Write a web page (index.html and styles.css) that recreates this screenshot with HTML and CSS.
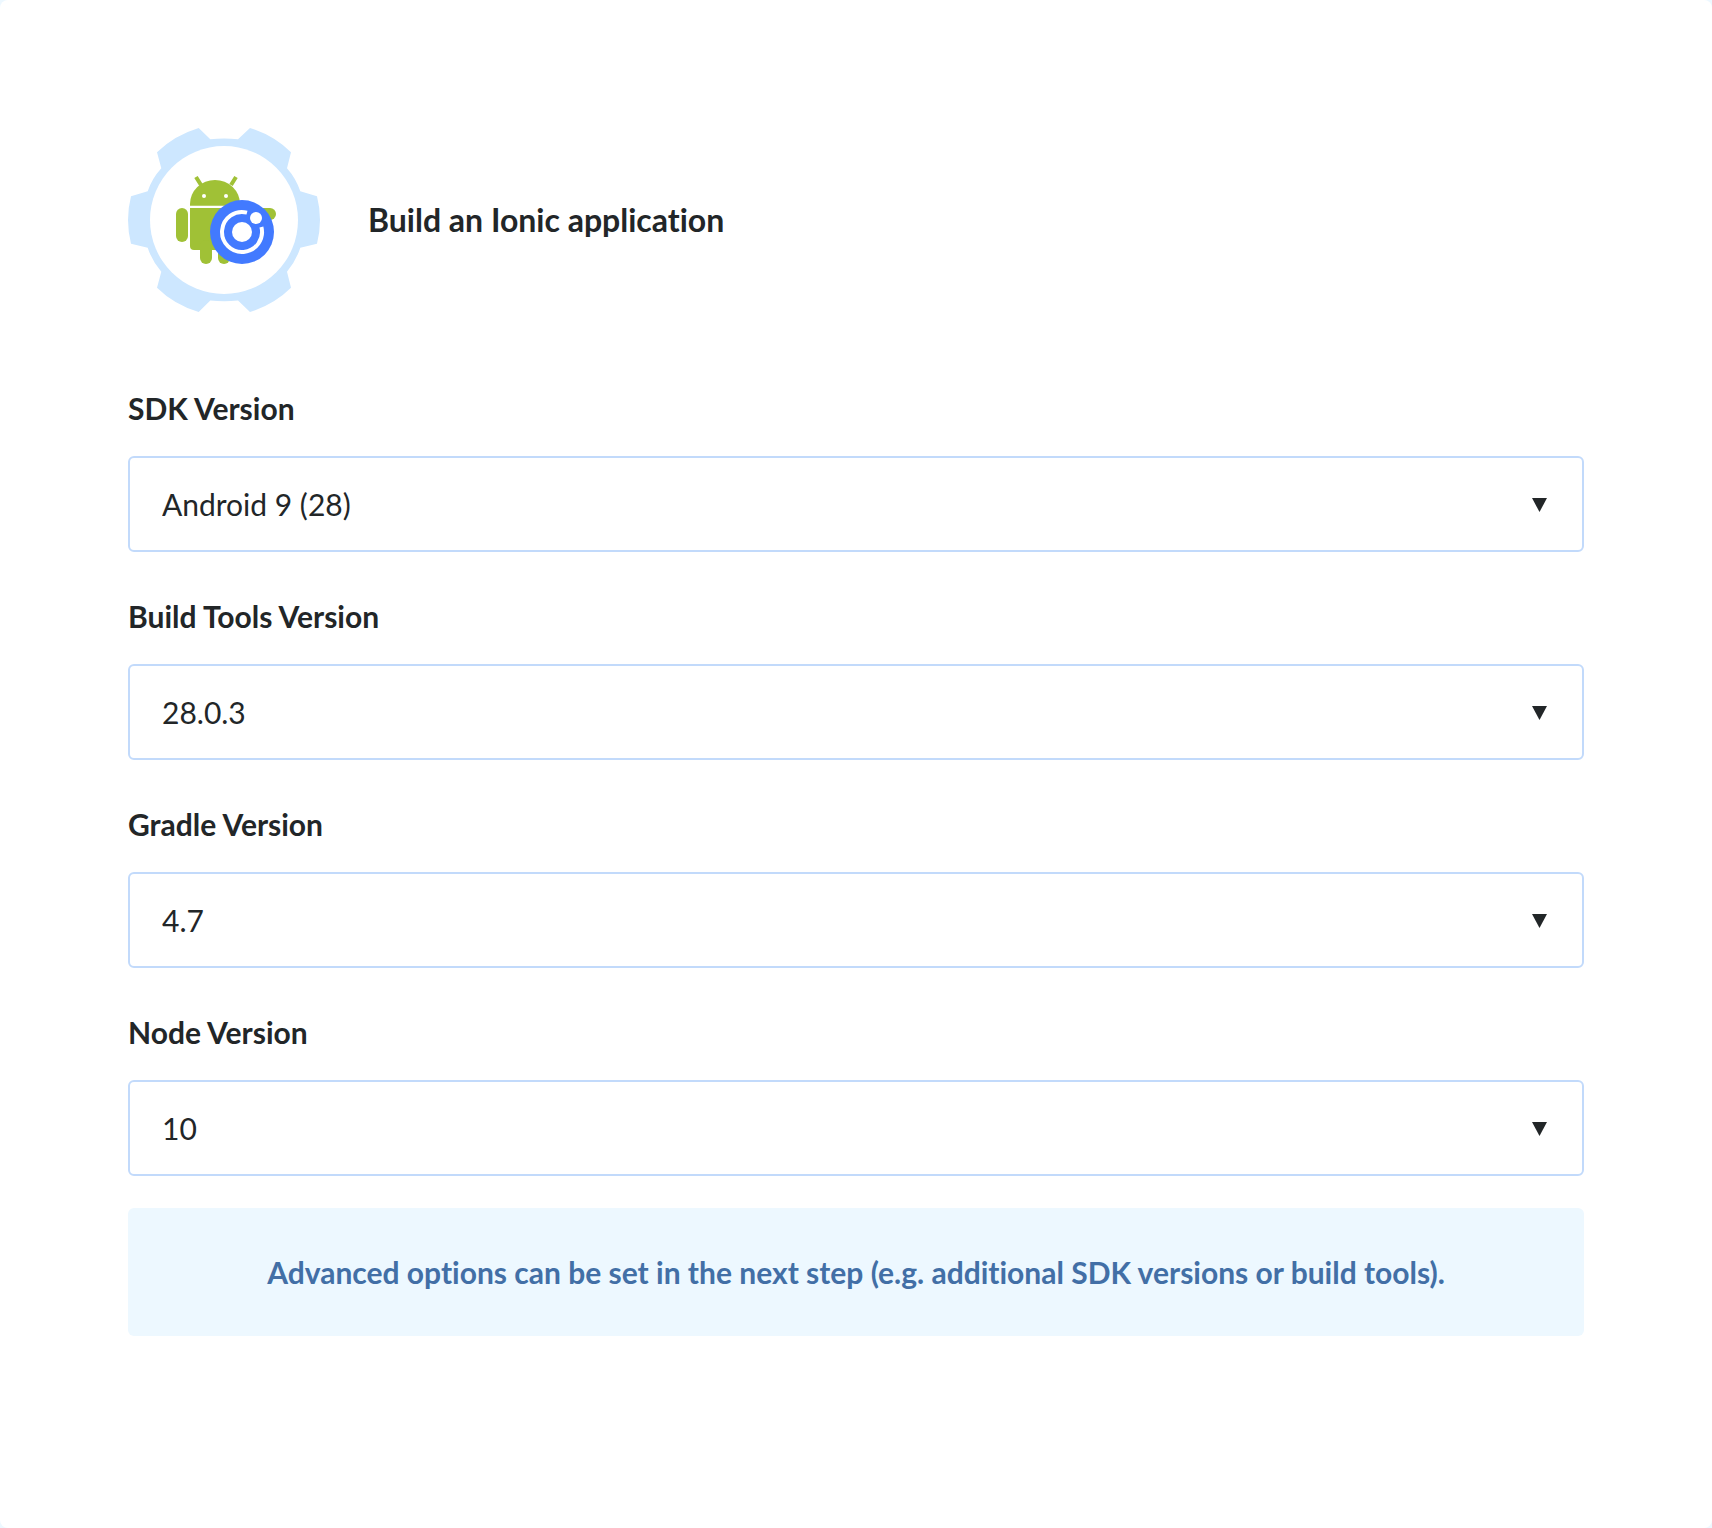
FILE: index.html
```html
<!DOCTYPE html>
<html lang="en">
<head>
<meta charset="utf-8">
<meta name="viewport" content="width=device-width, initial-scale=1">
<title>Build an Ionic application</title>
<link rel="stylesheet" href="styles.css">
</head>
<body>
<main class="card">
  <header class="card-header">
    <svg class="stack-icon" viewBox="0 0 192 192" aria-hidden="true">
      <path fill="#cde7ff" d="M70.7 4 82.3 15.2Q96 13.800 110 15.200L122 4Q146 11.500 163 28.300L159 44.300Q168 54.500 172.300 67.300L189 72.300Q195 96 189 119.700L172.300 123.700Q168 137 159 147.700L163 163.700Q146 180.500 122 188L110 176.500Q96 178 82.300 176.500L70.700 188Q46 180.500 29 163.700L33.300 147.700Q24 137 19.700 123.700L3 119.700Q-3 96 3 72.300L19.700 67.300Q24 54.500 33.300 44.300L29 28.300Q46 11.500 70.700 4Z"/>
      <circle cx="96" cy="96" r="74" fill="#fff"/>
      <g fill="#a0c136">
        <path d="M62 81.700V80a25 24 0 0 1 50 0v1.700Z"/>
        <path d="m68 53 5 8M108 53l-5 8" stroke="#a0c136" stroke-width="4"/>
        <rect x="48" y="84" width="12" height="34" rx="6"/>
        <path d="M62 84h50v42H66q-4 0-4-4Z"/>
        <rect x="72" y="116" width="12" height="24" rx="6"/>
        <rect x="90" y="116" width="12" height="24" rx="6"/>
        <rect x="114" y="84" width="34" height="12" rx="6"/>
      </g>
      <circle cx="76" cy="72" r="2" fill="#fff"/>
      <circle cx="98" cy="72" r="2" fill="#fff"/>
      <circle cx="114" cy="108" r="32" fill="#427aff"/>
      <circle cx="114" cy="108" r="10" fill="#fff"/>
      <path d="M119 88.600A20 20 0 1 0 133.400 103" fill="none" stroke="#fff" stroke-width="4"/>
      <circle cx="128" cy="94" r="6" fill="#fff"/>
    </svg>
    <h1 class="card-title">Build an Ionic application</h1>
  </header>
  <form class="options">
    <div class="field">
      <label class="field-label" for="sdk">SDK Version</label>
      <div class="select-box"><select class="select" id="sdk"><option>Android 9 (28)</option></select></div>
    </div>
    <div class="field">
      <label class="field-label" for="tools">Build Tools Version</label>
      <div class="select-box"><select class="select" id="tools"><option>28.0.3</option></select></div>
    </div>
    <div class="field">
      <label class="field-label" for="gradle">Gradle Version</label>
      <div class="select-box"><select class="select" id="gradle"><option>4.7</option></select></div>
    </div>
    <div class="field">
      <label class="field-label" for="node">Node Version</label>
      <div class="select-box"><select class="select" id="node"><option>10</option></select></div>
    </div>
  </form>
  <p class="note">Advanced options can be set in the next step (e.g. additional SDK versions or build tools).</p>
</main>
</body>
</html>
```
FILE: styles.css
```css
* {
  box-sizing: border-box;
}

body {
  margin: 0;
  background: #edf8ff;
  color: #222628;
  font-family: Lato, "Liberation Sans", sans-serif;
  font-size: 30px;
  line-height: 40px;
  font-variant-ligatures: none;
}

.card {
  min-height: 100vh;
  padding: 124px 128px 128px;
  border-radius: 8px;
  background: #fff;
}

.card-header {
  display: flex;
  align-items: center;
  gap: 48px;
  margin-bottom: 72px;
}

.stack-icon {
  flex: none;
  width: 192px;
  height: 192px;
}

.card-title {
  margin: 0;
  font-size: 32px;
  font-weight: 700;
}

.options {
  display: grid;
  gap: 44px;
}

.field {
  display: grid;
  gap: 28px;
}

.field-label {
  font-weight: 700;
}

.select-box {
  display: grid;
  align-items: center;
}

.select-box::after {
  grid-area: 1 / 1;
  justify-self: end;
  width: 15px;
  height: 14px;
  margin: 2px 37px 0 0;
  background: #222628;
  clip-path: polygon(0 0, 100% 0, 50% 100%);
  content: "";
  pointer-events: none;
}

.select {
  grid-area: 1 / 1;
  width: 100%;
  height: 96px;
  padding: 0 32px;
  border: 2px solid #c2dafb;
  border-radius: 6px;
  appearance: none;
  background: #fff;
  color: inherit;
  font: inherit;
}

.note {
  margin: 32px 0 0;
  padding: 44px 32px;
  border-radius: 6px;
  background: #edf8ff;
  color: #426fa6;
  font-weight: 700;
  text-align: center;
}
```
